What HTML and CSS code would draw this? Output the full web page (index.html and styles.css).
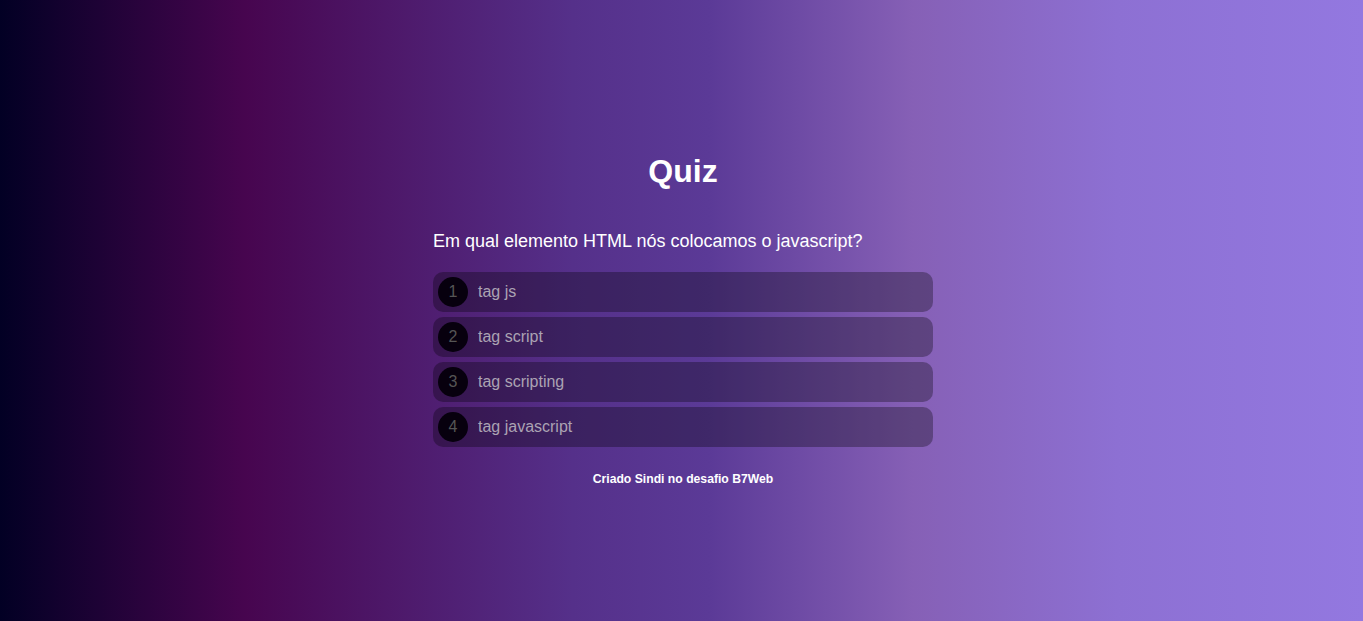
FILE: index.html
```html
<!DOCTYPE html>
<html lang="pt-BR">
<head>
<meta charset="utf-8">
<title>Quiz</title>
<link rel="stylesheet" href="styles.css">
</head>
<body>
<main class="container">
  <h1 class="title">Quiz</h1>
  <div class="question">Em qual elemento HTML nós colocamos o javascript?</div>
  <div class="options">
    <div class="option"><span class="num">1</span><span class="label">tag js</span></div>
    <div class="option"><span class="num">2</span><span class="label">tag script</span></div>
    <div class="option"><span class="num">3</span><span class="label">tag scripting</span></div>
    <div class="option"><span class="num">4</span><span class="label">tag javascript</span></div>
  </div>
  <footer class="footer">Criado Sindi no desafio B7Web</footer>
</main>
</body>
</html>
```

FILE: styles.css
```css
html, body {
  margin: 0;
  padding: 0;
}
body {
  min-height: 100vh;
  padding-left: 3px;
  box-sizing: border-box;
  font-family: "Liberation Sans", Arial, sans-serif;
  color: #fff;
  background: linear-gradient(90deg, #020024 0%, #47054f 18%, #55308a 42%, #5b3a97 52%, #8660b6 67%, #8d70d3 82%, #9378e0 100%);
}
.container {
  width: 500px;
  margin: 0 auto;
  padding-top: 153px;
  display: flex;
  flex-direction: column;
}
.title {
  margin: 0;
  font-size: 32px;
  line-height: 37px;
  font-weight: bold;
  text-align: center;
}
.question {
  margin-top: 41px;
  font-size: 18px;
  line-height: 21px;
}
.options {
  margin-top: 20px;
  display: flex;
  flex-direction: column;
  gap: 5px;
}
.option {
  height: 40px;
  box-sizing: border-box;
  padding: 0 5px;
  border-radius: 10px;
  background: rgba(0, 0, 0, 0.3);
  display: flex;
  align-items: center;
  gap: 10px;
}
.num {
  width: 30px;
  height: 30px;
  border-radius: 50%;
  background: #07000e;
  color: #555;
  font-size: 16px;
  display: flex;
  align-items: center;
  justify-content: center;
}
.label {
  font-size: 16px;
  color: #aba3b3;
}
.footer {
  margin-top: 25px;
  font-size: 12.2px;
  line-height: 14px;
  font-weight: bold;
  text-align: center;
}
```
